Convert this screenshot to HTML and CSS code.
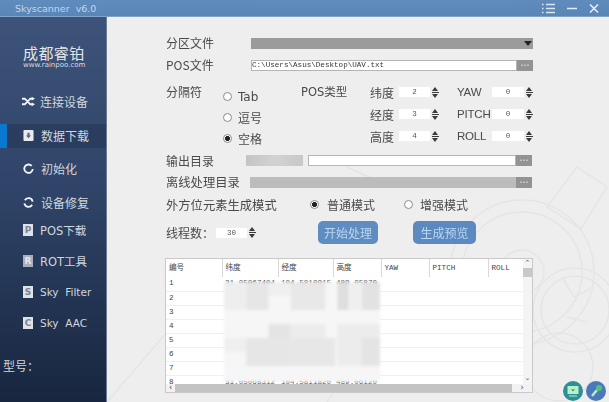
FILE: index.html
```html
<!DOCTYPE html>
<html lang="zh">
<head>
<meta charset="utf-8">
<title>Skyscanner v6.0</title>
<link rel="stylesheet" href="styles.css">
</head>
<body>
<div class="app">
  <header class="titlebar">
    <span class="app-title">Skyscanner&nbsp; v6.0</span>
    <div class="win-btns">
      <svg width="14" height="11" viewBox="0 0 14 11"><path d="M0 1.5h1.500M0 5.500h1.500M0 9.500h1.500M4 1.500h9M4 5.500h9M4 9.500h9" stroke="#dbe6f1" stroke-width="1.300"/></svg>
      <svg width="11" height="11" viewBox="0 0 11 11"><path d="M0 5.500h10" stroke="#e6eef6" stroke-width="1.500"/></svg>
      <svg width="10" height="11" viewBox="0 0 10 11"><path d="M1 1.500l8 8M9 1.500l-8 8" stroke="#e6eef6" stroke-width="1.600"/></svg>
    </div>
  </header>
  <div class="columns">
    <aside class="sidebar">
      <div class="logo">
        <div class="logo-name">成都睿铂</div>
        <div class="logo-url">www.rainpoo.com</div>
      </div>
      <nav class="nav">
        <div class="nav-item"><svg class="nav-icon" viewBox="0 0 14 10"><path d="M0 2h3l6 6h2M0 8h3l6-6h2" fill="none" stroke="#f2f4f7" stroke-width="2"/><path d="M10.500 0l3.500 2-3.500 2zM10.500 6l3.500 2-3.500 2z" fill="#f2f4f7"/></svg><span>连接设备</span></div>
        <div class="nav-item active"><svg class="nav-icon" viewBox="0 0 11 12"><rect width="11" height="12" rx="1" fill="#e8eaee"/><path d="M4.300 3h2.400v3h1.600l-2.800 3-2.800-3h1.600z" fill="#5c6780"/></svg><span>数据下载</span></div>
        <div class="nav-item"><svg class="nav-icon" viewBox="0 0 12 12"><path d="M9.500 3.200A4.600 4.600 0 1 0 10.600 6.500" fill="none" stroke="#f2f4f7" stroke-width="2"/></svg><span>初始化</span></div>
        <div class="nav-item tail"><svg class="nav-icon" viewBox="0 0 12 12"><path d="M2 3.500A4.600 4.600 0 0 1 10.500 5M10 8.500A4.600 4.600 0 0 1 1.500 7" fill="none" stroke="#f2f4f7" stroke-width="2"/></svg><span>设备修复</span></div>
        <div class="nav-item tight"><i class="letter-icon">P</i><span>POS下载</span></div>
        <div class="nav-item tight"><i class="letter-icon dim">R</i><span>ROT工具</span></div>
        <div class="nav-item tight"><i class="letter-icon">S</i><span class="wide">Sky&nbsp; Filter</span></div>
        <div class="nav-item tight"><i class="letter-icon">C</i><span class="wide">Sky&nbsp; AAC</span></div>
      </nav>
      <div class="model">型号：</div>
    </aside>
    <main class="main">
      <svg class="art" viewBox="0 0 502 385" aria-hidden="true">
        <g fill="none" stroke="#e5e5e5" stroke-width="1.500">
          <circle cx="415" cy="255" r="72"/>
          <circle cx="415" cy="255" r="60"/>
          <circle cx="415" cy="255" r="22"/>
          <circle cx="468" cy="293" r="42"/>
          <circle cx="468" cy="293" r="34"/>
          <circle cx="452" cy="350" r="34"/>
          <path d="M0 385l60-70M220 385l18-26M440 190l30-40 30 20-26 42zM240 150l40 18"/>
          <path d="M455 260l12 20 16-8M460 300l20 5"/>
        </g>
      </svg>
      <div class="row r-file"><label class="lbl lbl-file">分区文件</label><div class="select"><span class="caret"></span></div></div>
      <div class="row r-file"><label class="lbl lbl-file">POS文件</label><div class="path-box"><span class="path">C:\Users\Asus\Desktop\UAV.txt</span></div><span class="dots">•••</span></div>
      <div class="params">
        <label class="lbl sep-lbl">分隔符</label>
        <div class="radios">
          <div class="radio-row"><i class="radio"></i><span>Tab</span></div>
          <div class="radio-row"><i class="radio"></i><span>逗号</span></div>
          <div class="radio-row"><i class="radio on"></i><span>空格</span></div>
        </div>
        <label class="lbl type-lbl">POS类型</label>
        <div class="fields">
          <div class="field"><label class="f-name">纬度</label><span class="num">2</span><i class="spin"></i><label class="f-name f-gap">YAW</label><span class="num n2">0</span><i class="spin"></i></div>
          <div class="field"><label class="f-name">经度</label><span class="num">3</span><i class="spin"></i><label class="f-name f-gap">PITCH</label><span class="num n2">0</span><i class="spin"></i></div>
          <div class="field"><label class="f-name">高度</label><span class="num">4</span><i class="spin"></i><label class="f-name f-gap">ROLL</label><span class="num n2">0</span><i class="spin"></i></div>
        </div>
      </div>
      <div class="row r-dir"><label class="lbl lbl-out">输出目录</label><div class="masked"></div><div class="path-box out"></div><span class="dots">•••</span></div>
      <div class="row r-dir"><label class="lbl lbl-off">离线处理目录</label><div class="disabled-box"></div><span class="dots">•••</span></div>
      <div class="row r-mode"><label class="lbl lbl-mode">外方位元素生成模式</label><div class="radio-row m1"><i class="radio on"></i><span>普通模式</span></div><div class="radio-row m2"><i class="radio"></i><span>增强模式</span></div></div>
      <div class="row r-act"><label class="lbl lbl-thread">线程数：</label><span class="num thread">30</span><i class="spin"></i><button class="btn b1">开始处理</button><button class="btn b2">生成预览</button></div>
      <section class="grid-wrap">
        <div class="grid-view">
        <table class="grid">
          <colgroup><col class="c1"><col class="c2"><col class="c3"><col class="c4"><col class="c5"><col class="c6"><col class="c7"></colgroup>
          <thead><tr><th>编号</th><th>纬度</th><th>经度</th><th>高度</th><th>YAW</th><th>PITCH</th><th>ROLL</th></tr></thead>
          <tbody>
            <tr><td>1</td><td>31.05067404</td><td>104.5810915</td><td>489.05870</td><td></td><td></td><td></td></tr>
            <tr><td>2</td><td></td><td></td><td></td><td></td><td></td><td></td></tr>
            <tr><td>3</td><td></td><td></td><td></td><td></td><td></td><td></td></tr>
            <tr><td>4</td><td></td><td></td><td></td><td></td><td></td><td></td></tr>
            <tr><td>5</td><td></td><td></td><td></td><td></td><td></td><td></td></tr>
            <tr><td>6</td><td></td><td></td><td></td><td></td><td></td><td></td></tr>
            <tr><td>7</td><td></td><td></td><td></td><td></td><td></td><td></td></tr>
            <tr><td>8</td><td>31.05068312</td><td>104.5811820</td><td>489.06120</td><td></td><td></td><td></td></tr>
          </tbody>
        </table>
        </div>
        <svg class="mosaic" viewBox="0 0 154 100" preserveAspectRatio="none" aria-hidden="true">
          <rect width="154" height="100" fill="#f6f6f6"/>
          <g>
            <rect x="0" y="0" width="22" height="28" fill="#eeeeee"/>
            <rect x="22" y="0" width="22" height="28" fill="#e6e6e6"/>
            <rect x="44" y="0" width="22" height="14" fill="#efefef"/>
            <rect x="66" y="0" width="34" height="28" fill="#e8e8e8"/>
            <rect x="112" y="0" width="11" height="28" fill="#dedede"/>
            <rect x="124" y="0" width="11" height="28" fill="#efefef"/>
            <rect x="136" y="0" width="18" height="28" fill="#e2e2e2"/>
            <rect x="44" y="42" width="22" height="14" fill="#e4e4e4"/>
            <rect x="66" y="42" width="34" height="14" fill="#ececec"/>
            <rect x="0" y="56" width="44" height="14" fill="#efefef"/>
            <rect x="22" y="56" width="44" height="28" fill="#e6e6e6"/>
            <rect x="66" y="56" width="44" height="28" fill="#e7e7e7"/>
            <rect x="112" y="42" width="42" height="42" fill="#ececec"/>
            <rect x="136" y="56" width="18" height="28" fill="#e4e4e4"/>
          </g>
        </svg>
        <div class="v-scroll"><span class="sb-arrow">⌃</span><i class="v-thumb"></i><span class="sb-arrow end">⌄</span></div>
        <div class="h-scroll"><span class="sb-h">‹</span><i class="h-thumb"></i><span class="sb-h right">›</span></div>
      </section>
      <div class="tray">
        <svg width="20" height="20" viewBox="0 0 20 20"><circle cx="10" cy="10" r="10" fill="#2e8f97"/><rect x="4.500" y="5" width="11" height="8" fill="#b8f0c8"/><path d="M7 8h6l-3 3zM6 15h8" fill="#2e8f97" stroke="#b8f0c8"/></svg>
        <svg width="20" height="20" viewBox="0 0 20 20"><circle cx="10" cy="10" r="10" fill="#4a78b8"/><path d="M6 15l5-6" stroke="#b8e8d0" stroke-width="2.500"/><circle cx="13" cy="7" r="3" fill="#4cc47a"/></svg>
      </div>
    </main>
  </div>
</div>
</body>
</html>
```

FILE: styles.css
```css
* { box-sizing: border-box; }
html, body { margin: 0; padding: 0; }
body { width: 609px; height: 402px; overflow: hidden; background: #eee; font-family: "DejaVu Sans", "Noto Sans CJK SC", sans-serif; }
.app { width: 609px; height: 402px; display: flex; flex-direction: column; filter: blur(0.45px); }

.titlebar { height: 17px; flex: none; display: flex; align-items: center; justify-content: space-between; padding: 0 10px 0 15px; background: linear-gradient(#5f8cbd, #5a86b7); border-bottom: 1px solid #7fa3cb; }
.app-title { font-size: 9.5px; color: #c3d7ea; line-height: 15px; }
.win-btns { display: flex; align-items: center; gap: 11px; height: 15px; }

.columns { flex: 1; display: flex; min-height: 0; }

.sidebar { width: 107px; flex: none; background: linear-gradient(#3e5379, #2f4468 45%, #18263f); display: flex; flex-direction: column; border-right: 1px solid #6d7c95; color: #d8dbe1; }
.logo { height: 60px; padding: 28px 0 0 23px; }
.logo-name { font-size: 15px; line-height: 15px; letter-spacing: 0.4px; color: #e4e6ea; font-family: "Noto Sans CJK SC", sans-serif; }
.logo-url { font-size: 7px; line-height: 8px; color: #d9dde3; margin-top: 1px; white-space: nowrap; }
.nav { display: flex; flex-direction: column; margin-top: 8px; }
.nav-item { height: 33.5px; display: flex; align-items: center; padding-left: 23px; gap: 7px; font-size: 12px; font-family: "Noto Sans CJK SC", sans-serif; position: relative; color: #d2d6dd; }
.nav-item.tail { margin-bottom: -5px; }
.nav-item.tight { height: 31px; }
.nav-item.active { height: 24px; margin: 5px 0 4.5px; background: rgba(20, 32, 58, 0.28); }
.nav-item.active::before { content: ""; position: absolute; left: 0; top: 0; width: 7px; height: 100%; background: #0b78cf; }
.nav-icon { width: 11px; height: 11px; flex: none; }
.nav-item:first-child .nav-icon { width: 13px; margin-right: -2px; margin-left: -1px; }
.wide { font-family: "DejaVu Sans", sans-serif; font-size: 10.5px; }
.nav-item.tight span:not(.wide) { font-family: "DejaVu Sans", "Noto Sans CJK SC", sans-serif; font-size: 11.5px; }
.letter-icon { width: 10px; height: 12px; flex: none; display: flex; align-items: center; justify-content: center; background: #dfe2e7; color: #7a8296; font: bold 9px "DejaVu Sans", sans-serif; }
.letter-icon.dim { background: #a9afbb; color: #e4e6ea; }
.model { margin: 19px 0 0 3px; font-size: 12px; color: #d2d6dd; font-family: "Noto Sans CJK SC", sans-serif; }

.main { flex: 1; position: relative; padding: 15px 0 0 59px; display: flex; flex-direction: column; font-family: "Noto Sans CJK SC", sans-serif; color: #4a4a4a; min-width: 0; }
.art { position: absolute; left: 0; top: 0; width: 502px; height: 385px; pointer-events: none; }
.row, .params, .grid-wrap { position: relative; }
.row { display: flex; align-items: center; flex: none; }
.r-file { height: 22px; }
.r-dir { height: 21.5px; }
.lbl { font-size: 12px; line-height: 16px; white-space: nowrap; flex: none; }
.lbl-file { width: 85px; }
.lbl-out { width: 80px; }
.lbl-off { width: 84px; font-size: 12.3px; }
.lbl-mode { width: 142px; font-size: 12.3px; }
.lbl-thread { width: 50px; }

.select { width: 282px; height: 11px; background: #9b9b9b; position: relative; }
.caret { position: absolute; right: 1px; top: 3px; border: 4px solid transparent; border-top: 5px solid #222; border-bottom: 0; }
.path-box { width: 266px; height: 11px; background: #fff; border: 1px solid #b5b5b5; display: flex; align-items: center; }
.path { font: 7.6px/9px "Liberation Mono", monospace; color: #333; white-space: nowrap; }
.path-box.out { width: 208px; margin-left: 5px; }
.dots { width: 16px; height: 11px; background: #939393; color: #e8e8e8; font: 5px/11px "DejaVu Sans", sans-serif; text-align: center; flex: none; }
.masked { width: 57px; height: 11px; background: linear-gradient(90deg, #c4c4c4, #d2d2d2 50%, #c8c8c8); flex: none; }
.disabled-box { width: 266px; height: 11px; background: #bcbcbc; flex: none; }

.params { height: 74px; flex: none; display: flex; }
.sep-lbl { width: 57px; margin-top: 8px; }
.radios { width: 78px; padding-top: 10px; display: flex; flex-direction: column; }
.radio-row { display: flex; align-items: center; gap: 6px; height: 21px; font-size: 12px; white-space: nowrap; font-family: "DejaVu Sans", "Noto Sans CJK SC", sans-serif; }
.radio { width: 9px; height: 9px; border-radius: 50%; background: #fff; border: 1px solid #8a8a8a; flex: none; }
.radio.on { background: radial-gradient(circle, #222 0 2.2px, #fff 2.8px); }
.type-lbl { width: 69px; margin-top: 8px; font-family: "DejaVu Sans", "Noto Sans CJK SC", sans-serif; font-size: 11.5px; }
.fields { display: flex; flex-direction: column; padding-top: 5px; }
.field { display: flex; align-items: center; height: 22px; }
.f-name { width: 29px; font-size: 12px; flex: none; }
.f-gap { width: 35px; margin-left: 18px; font: 11.5px "Liberation Sans", sans-serif; letter-spacing: -0.2px; }
.num { width: 31px; height: 10px; background: #fff; font: 7.5px/10px "Liberation Mono", monospace; text-align: center; color: #555; flex: none; }
.n2 { width: 32px; }
.spin { width: 7px; height: 11px; margin-left: 2px; flex: none; position: relative; background: linear-gradient(#3a3a3a, #3a3a3a) center/7px 1px no-repeat; }
.spin::before, .spin::after { content: ""; position: absolute; left: 0; border: 3.5px solid transparent; }
.spin::before { top: 0; border-bottom: 4px solid #3a3a3a; border-top: 0; }
.spin::after { bottom: 0; border-top: 4px solid #3a3a3a; border-bottom: 0; }

.r-mode { height: 23px; }
.m1 { width: 94px; gap: 8px; margin-left: 2px; }
.m2 { gap: 7px; }
.r-act { height: 27px; margin-top: 3px; }
.thread { width: 31px; }
.btn { border: 0; padding: 0; height: 23px; border-radius: 5px; background: #5c8ac0; color: #bcd7ef; font: 12px/23px "Noto Sans CJK SC", sans-serif; flex: none; }
.b1 { width: 60px; margin-left: 62px; background: #5f8dc2; }
.b2 { width: 63px; margin-left: 35px; }

.grid-wrap { width: 368px; height: 135px; margin: 12px 0 0 -1px; background: #fff; border: 1px solid #c9c9c9; overflow: hidden; flex: none; }
.grid-view { height: 125px; overflow: hidden; }
.grid { width: 358px; table-layout: fixed; border-collapse: collapse; font: 7.6px/13px "Liberation Mono", monospace; color: #444; }
.c1 { width: 56px; } .c2 { width: 56px; } .c3 { width: 55px; } .c4 { width: 48px; } .c5 { width: 48px; } .c6 { width: 59px; } .c7 { width: 36px; }
.grid th { height: 18px; font-weight: normal; text-align: left; padding: 0 0 0 3px; border-right: 1px solid #d8d8d8; font-family: "Liberation Mono", "Noto Sans CJK SC", monospace; }
.grid th:last-child { border-right: 0; }
.grid td { height: 14px; padding: 0 0 0 3px; border-bottom: 1px solid #f0f0f0; white-space: nowrap; overflow: hidden; }
.mosaic { position: absolute; left: 58px; top: 23px; width: 156px; height: 100px; filter: blur(1.5px); }
.v-scroll { position: absolute; right: 0; top: 0; width: 9px; height: 126px; background: #f4f4f4; display: flex; flex-direction: column; }
.sb-arrow { height: 9px; font: 7px/9px "DejaVu Sans", sans-serif; text-align: center; color: #555; }
.sb-arrow.end { margin-top: auto; margin-bottom: 2px; }
.v-thumb { height: 9px; background: #c8c8c8; }
.h-scroll { position: absolute; left: 0; right: 0; bottom: 0; height: 8px; background: #f2f2f2; display: flex; }
.sb-h { width: 9px; font: 8px/8px "DejaVu Sans", sans-serif; text-align: center; color: #444; flex: none; }
.sb-h.right { width: 20px; }
.h-thumb { flex: 1; background: #c3c3c3; }

.tray { position: absolute; right: 3px; bottom: 1px; display: flex; gap: 3px; height: 20px; }
```
